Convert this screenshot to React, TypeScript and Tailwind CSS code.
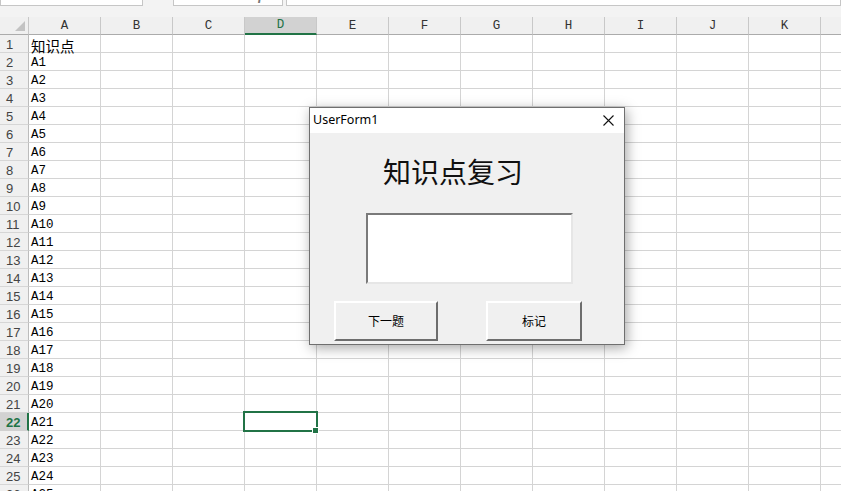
import React from "react";

const COLS = ["A", "B", "C", "D", "E", "F", "G", "H", "I", "J", "K", "L"];
const ROWS = Array.from({ length: 26 }, (_, i) => i + 1);

const mono = { fontFamily: '"Liberation Mono", "Noto Sans CJK SC", monospace' };
const sans = { fontFamily: '"Liberation Sans", Arial, sans-serif' };
const ui = { fontFamily: '"Noto Sans", "Liberation Sans", sans-serif' };
const cjk = { fontFamily: '"Noto Sans CJK SC", sans-serif' };

function cellText(r: number, c: number) {
  if (c !== 0) return null;
  if (r === 1)
    return (
      <span className="text-[14.5px]" style={cjk}>
        知识点
      </span>
    );
  return <span>{`A${r - 1}`}</span>;
}

export default function App() {
  return (
    <div className="relative w-[841px] h-[491px] overflow-hidden bg-white text-black">
      {/* formula bar (cut off at top) */}
      <div className="h-[17px] bg-[#f3f3f3] overflow-hidden">
        <div className="mt-[-17px] h-[23px] flex">
          <div
            className="w-[143px] h-full bg-white border border-[#c6c6c6] pl-[5px] pt-[4px] text-[13px] leading-[15px] text-[#222]"
            style={sans}
          >
            D22
          </div>
          <div className="w-[30px]" />
          <div
            className="w-[110px] h-full bg-white border border-[#c6c6c6] flex items-end pb-[1px] text-[#a8a8a8] text-[14px] leading-[16px]"
            style={sans}
          >
            <span className="ml-[8px]">✕</span>
            <span className="ml-[30px]">✓</span>
            <span className="ml-[22px] italic font-bold text-[#777]" style={{ fontFamily: '"Liberation Serif", serif' }}>
              fx
            </span>
          </div>
          <div className="w-[3px]" />
          <div className="flex-1 h-full bg-white border border-[#c6c6c6]" />
        </div>
      </div>

      {/* column header row */}
      <div className="flex h-[18px] bg-[#f0f0f0]">
        <div className="w-[29px] shrink-0 h-full border-r border-b border-r-[#c8c8c8] border-b-[#ababab] relative">
          <svg className="absolute left-[15px] top-[4px]" width="11" height="11" viewBox="0 0 11 11">
            <polygon points="10,0 10,10 0,10" fill="#c3c3c3" />
          </svg>
        </div>
        {COLS.map((c) =>
          c === "D" ? (
            <div
              key={c}
              className="w-[72px] shrink-0 h-full bg-[#d2d2d2] border-r border-r-[#c8c8c8] border-b-2 border-b-[#217346] flex items-center justify-center text-[12.5px] text-[#217346] leading-none pt-[1px]"
              style={mono}
            >
              {c}
            </div>
          ) : (
            <div
              key={c}
              className="w-[72px] shrink-0 h-full border-r border-b border-r-[#c8c8c8] border-b-[#ababab] flex items-center justify-center text-[12.5px] text-[#333] leading-none pt-[1px]"
              style={mono}
            >
              {c}
            </div>
          )
        )}
      </div>

      {/* rows */}
      {ROWS.map((r) => (
        <div key={r} className="flex h-[18px]">
          {r === 22 ? (
            <div
              className="w-[29px] shrink-0 h-full bg-[#d2d2d2] border-r-2 border-r-[#217346] border-b border-b-[#d0d0d0] pl-[6px] text-[13px] leading-[20px] text-[#217346] font-bold"
              style={sans}
            >
              {r}
            </div>
          ) : (
            <div
              className="w-[29px] shrink-0 h-full bg-[#f0f0f0] border-r border-r-[#bcbcbc] border-b border-b-[#d6d6d6] pl-[6px] text-[13px] leading-[20px] text-[#444]"
              style={sans}
            >
              {r}
            </div>
          )}
          {COLS.map((c, ci) => (
            <div
              key={c}
              className="w-[72px] shrink-0 h-full border-r border-b border-[#d4d4d4] pl-[2px] text-[12.5px] leading-[21px] whitespace-nowrap overflow-visible"
              style={mono}
            >
              {cellText(r, ci)}
            </div>
          ))}
        </div>
      ))}

      {/* selection D22 */}
      <div className="absolute left-[243px] top-[411px] w-[75px] h-[21px] border-2 border-[#217346]" />
      <div className="absolute left-[312px] top-[427px] w-[7px] h-[7px] bg-[#217346] border border-white" />

      {/* UserForm1 dialog */}
      <div className="absolute left-[309px] top-[107px] w-[316px] h-[238px] border border-[#6f6f6f] bg-[#f0f0f0] shadow-[2px_3px_12px_rgba(0,0,0,0.35)] flex flex-col">
        <div className="h-[25px] bg-white flex items-center justify-between pl-[3px] pr-[10px]">
          <span className="text-[12.5px] text-black" style={ui}>
            UserForm1
          </span>
          <svg width="11" height="11" viewBox="0 0 11 11">
            <path d="M0.5 0.5 L10.5 10.5 M10.5 0.5 L0.5 10.5" stroke="#111" strokeWidth="1.1" />
          </svg>
        </div>
        <div className="flex-1 flex flex-col">
          <div className="h-[80px] pl-[73px] pt-[20px] text-[28px] leading-[36px] text-[#111]" style={cjk}>
            知识点复习
          </div>
          <div className="ml-[56px] w-[207px] h-[71px] bg-white border-2 border-t-[#7a7a7a] border-l-[#7a7a7a] border-b-[#e6e6e6] border-r-[#e6e6e6]" />
          <div className="flex mt-[17px]">
            <div
              className="ml-[24px] w-[104px] h-[40px] border-2 border-t-white border-l-white border-b-[#6d6d6d] border-r-[#6d6d6d] flex items-center justify-center text-[12px] text-black"
              style={cjk}
            >
              下一题
            </div>
            <div
              className="ml-[48px] w-[96px] h-[40px] border-2 border-t-white border-l-white border-b-[#6d6d6d] border-r-[#6d6d6d] flex items-center justify-center text-[12px] text-black"
              style={cjk}
            >
              标记
            </div>
          </div>
        </div>
      </div>
    </div>
  );
}
